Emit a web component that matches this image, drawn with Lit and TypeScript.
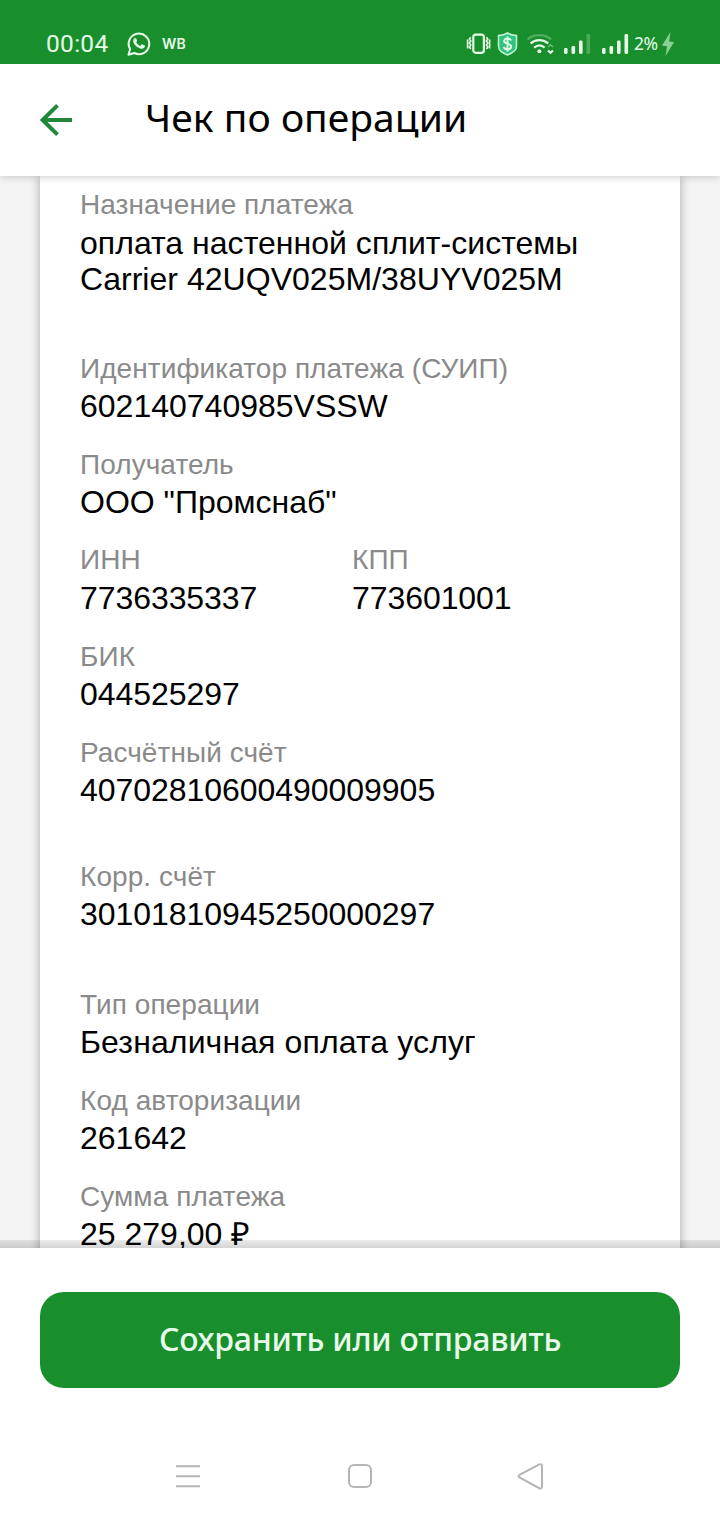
import { LitElement, html, css, svg } from "lit";
import { customElement } from "lit/decorators.js";

interface Field {
  label: string;
  value: string;
}

interface Row {
  fields: Field[];
  kind: string;
}

const rows: Row[] = [
  { fields: [{ label: "Назначение платежа", value: "оплата настенной сплит-системы\nCarrier 42UQV025M/38UYV025M" }], kind: "first xl" },
  { fields: [{ label: "Идентификатор платежа (СУИП)", value: "602140740985VSSW" }], kind: "" },
  { fields: [{ label: "Получатель", value: 'ООО "Промснаб"' }], kind: "" },
  { fields: [{ label: "ИНН", value: "7736335337" }, { label: "КПП", value: "773601001" }], kind: "pair" },
  { fields: [{ label: "БИК", value: "044525297" }], kind: "digits" },
  { fields: [{ label: "Расчётный счёт", value: "40702810600490009905" }], kind: "digits l" },
  { fields: [{ label: "Корр. счёт", value: "30101810945250000297" }], kind: "digits xl" },
  { fields: [{ label: "Тип операции", value: "Безналичная оплата услуг" }], kind: "words" },
  { fields: [{ label: "Код авторизации", value: "261642" }], kind: "" },
  { fields: [{ label: "Сумма платежа", value: "25 279,00 ₽" }], kind: "" },
];

const bars = (heights: number[], faded: number) =>
  heights.map((h, i) => svg`<rect x=${i * 7.5} y=${20 - h} width="3.6" height=${h} rx="1.4" opacity=${i === faded ? 0.25 : 1}></rect>`);

@customElement("status-bar")
export class StatusBar extends LitElement {
  static styles = css`
    :host { display: flex; box-sizing: border-box; height: 64px; padding: 24px 46px 0 46px; background: #188f2c; color: #e6fbe8; font-family: Roboto, sans-serif; align-items: center; }
    svg { display: block; flex: none; overflow: visible; }
    .time { width: 81px; font-size: 24.5px; letter-spacing: 0.3px; line-height: 40px; }
    .wb { margin-left: 12px; font: 600 14px/40px Inter, sans-serif; letter-spacing: 0.3px; }
    .space { flex: 1; }
    .shield { margin-left: 7px; }
    .wifi { margin-left: 9px; }
    .cell { margin-left: 11px; }
    .cell.second { margin-left: 12px; }
    .percent { width: 24px; margin-left: 6px; font: 17.5px/38px "Noto Sans", sans-serif; letter-spacing: -0.6px; white-space: nowrap; padding-bottom: 2px; }
    .bolt { margin-left: 4px; }
  `;

  render() {
    return html`
      <span class="time">00:04</span>
      <svg width="23" height="24" viewBox="0 0 23 24" fill="none" stroke="#e6fbe8" stroke-width="2">
        <path d="M1.5 22.7l1.6-5.6A10.3 10.3 0 1 1 7.2 21z" stroke-linejoin="round"></path>
        <path d="M7.6 6.2c.7-.5 1.3-.3 1.6.4l.8 1.9c.2.5-.1.9-.8 1.7 1 1.8 2.3 3 4.1 3.8l1.2-1.4c.3-.4.7-.4 1.1-.2l2 1c.5.3.5.6.3 1.2-.6 1.8-2.4 2.5-4.2 2.1-3.7-.9-6.5-3.6-7.4-6.6-.4-1.5.1-3 1.3-3.9z" fill="#e6fbe8" stroke="none"></path>
      </svg>
      <span class="wb">WB</span>
      <span class="space"></span>
      <svg width="23" height="22" viewBox="0 0 23 22" fill="none" stroke="#e6fbe8">
        <rect x="6.3" y="1.6" width="10.6" height="18.2" rx="2.5" stroke-width="2.2"></rect>
        <path d="M3.800 4.200L2.400 6l1.400 2-1.400 2 1.400 2-1.400 2 1.400 2M.6 6.400v9M19.400 4.200L20.800 6l-1.400 2 1.400 2-1.400 2 1.400 2-1.400 2M22.600 6.400v9" stroke-width="1.600"></path>
      </svg>
      <svg class="shield" width="21" height="24" viewBox="0 0 21 24">
        <path d="M10.5 1c2.5 1.6 5.5 2.3 9 2.4v11.2c0 4-3.8 6.4-9 8.4-5.2-2-9-4.400-9-8.400V3.400C5 3.300 8 2.600 10.500 1z" fill="#32c47c" stroke="#c5f5da" stroke-width="1.500"></path>
        <path d="M14 8.500c-.5-1.400-1.800-2-3.500-2-2 0-3.400 1-3.400 2.600 0 3.800 7 1.800 7 5.500 0 1.800-1.500 2.800-3.600 2.800-2 0-3.300-.8-3.700-2.400M10.500 4.500v15" fill="none" stroke="#e6fbe8" stroke-width="1.900"></path>
      </svg>
      <svg class="wifi" width="26" height="20" viewBox="0 0 26 20" fill="none" stroke="#e6fbe8" stroke-width="2.300">
        <path d="M.6 5.400c6.500-5.600 17-5.600 23.500 0" opacity=".28"></path>
        <path d="M3.600 9.500c5-4.500 12.600-4.500 17.600 0M7.200 13.600c3.200-2.700 7.200-2.700 10.400 0"></path>
        <circle cx="12.300" cy="17.300" r="2" fill="#e6fbe8" stroke="none"></circle>
        <path d="M21 13l2.500-2.300L26 13" stroke-width="1.500" opacity=".4"></path>
        <path d="M21 16.500l2.500 2.300 2.500-2.300" stroke-width="2"></path>
      </svg>
      <svg class="cell" width="26" height="20" viewBox="0 0 26 20" fill="#e6fbe8">${bars([6, 8, 13.5, 20], 3)}</svg>
      <svg class="cell second" width="26" height="20" viewBox="0 0 26 20" fill="#e6fbe8">${bars([6, 8, 13.5, 20], -1)}</svg>
      <span class="percent">2%</span>
      <svg class="bolt" width="12" height="24" viewBox="0 0 12 24"><path d="M8.500 0L0 13.500l5 .7L3.500 24 12 10.300l-4.800-.8z" fill="#8bd092"></path></svg>
    `;
  }
}

@customElement("app-root")
export class AppRoot extends LitElement {
  static styles = css`
    :host { display: flex; flex-direction: column; width: 720px; height: 1520px; overflow: hidden; background: #fff; color: #000; }
    * { box-sizing: border-box; }
    svg { display: block; overflow: visible; }
    .header { position: relative; z-index: 1; display: flex; align-items: center; height: 112px; padding-left: 40px; background: #fff; box-shadow: 0 1px 8px rgba(0, 0, 0, 0.2); flex: none; }
    status-bar { position: relative; z-index: 2; flex: none; }
    .title { margin: 0 0 6px 73px; font: 400 39px/50px "Noto Sans", sans-serif; letter-spacing: 0.05px; white-space: nowrap; }
    .content { height: 1072px; flex: none; overflow: hidden; padding: 0 40px; background: #f4f4f4; }
    .sheet { height: 1100px; padding: 10px 40px 0; background: #fff; box-shadow: 0 0 10px rgba(0, 0, 0, 0.32); font-family: "Liberation Sans", Arial, sans-serif; }
    .row { display: grid; grid-template-columns: 272px 1fr; height: 74px; margin-bottom: 22px; white-space: pre; }
    .row.xl { margin-bottom: 54px; }
    .row.l { margin-bottom: 50px; }
    .row.first { height: 110px; }
    .label { font-size: 28px; line-height: 37px; letter-spacing: 0.07px; color: #8a8a8a; }
    .value { margin-top: 1px; font-size: 32px; line-height: 37px; }
    .first .value { margin-top: 2px; line-height: 36px; letter-spacing: 0.03px; }
    .pair .label { line-height: 36px; }
    .pair .value { margin-top: 2px; letter-spacing: -0.07px; }
    .digits .value { letter-spacing: -0.04px; }
    .words .value { letter-spacing: 0.12px; }
    .footer { position: relative; z-index: 1; height: 184px; flex: none; padding: 44px 40px 0; background: #fff; }
    .edge { position: absolute; left: 0; right: 0; top: -8px; height: 8px; background: linear-gradient(rgba(0, 0, 0, 0.08), rgba(0, 0, 0, 0.17)); }
    .save { display: block; width: 640px; height: 96px; padding: 0 0 2px; border: 0; border-radius: 24px; background: #188f2c; color: #e9fbea; font: 500 32px/94px "Noto Sans", sans-serif; letter-spacing: -0.25px; white-space: nowrap; }
    .nav { display: flex; justify-content: space-between; height: 88px; padding: 32px 176px 0 175px; }
  `;

  render() {
    return html`
      <status-bar></status-bar>
      <header class="header">
        <svg width="32" height="32" viewBox="0 0 32 32" fill="none" stroke="#21883a" stroke-width="4"><path d="M17.500 1.300L2.600 16l14.900 14.700M2.600 16H32"></path></svg>
        <h1 class="title">Чек по операции</h1>
      </header>
      <main class="content">
        <section class="sheet">
          ${rows.map(
            (row) => html`<div class="row ${row.kind}">${row.fields.map(
              (f) => html`<div><div class="label">${f.label}</div><div class="value">${f.value}</div></div>`
            )}</div>`
          )}
        </section>
      </main>
      <footer class="footer">
        <div class="edge"></div>
        <button class="save">Сохранить или отправить</button>
      </footer>
      <nav class="nav">
        <svg width="26" height="26" viewBox="0 0 26 26" stroke="#b5b5b5" stroke-width="2"><path d="M1 2.300h24M1 12.300h24M1 22.300h24"></path></svg>
        <svg width="26" height="26" viewBox="0 0 26 26" fill="none" stroke="#b5b5b5" stroke-width="2"><rect x="2" y="1" width="22" height="22" rx="5"></rect></svg>
        <svg width="26" height="26" viewBox="0 0 26 26" fill="none" stroke="#b5b5b5" stroke-width="2"><path d="M1.500 10.800L21.300.400Q24 -.500 24 2v20.500Q24 25 21.300 24.200L1.500 13.500Q-.300 12.200 1.500 10.800z"></path></svg>
      </nav>
    `;
  }
}
